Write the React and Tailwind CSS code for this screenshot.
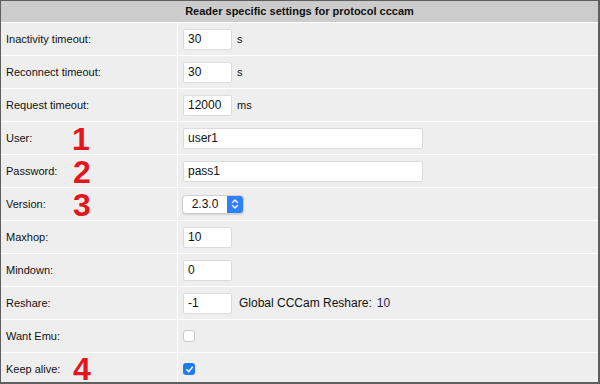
import React from "react";

const font = { fontFamily: '"Liberation Sans", Arial, sans-serif' };

function TextInput({ value, w = "w-[49px]" }) {
  return (
    <div className={`${w} h-[21px] bg-white border border-[#dcdcdc] rounded-[2px] flex items-center pl-[4px] text-[12px] text-[#111]`}>
      {value}
    </div>
  );
}

function Row({ label, children }) {
  return (
    <div className="flex gap-px h-[32px] shrink-0">
      <div className="w-[176px] bg-[#eeeeee] flex items-center pl-[5px] text-[11px] text-[#111]">{label}</div>
      <div className="flex-1 bg-[#eeeeee] flex items-center pl-[5px] text-[11px] text-[#111]">{children}</div>
    </div>
  );
}

function Mark({ n, top, left }) {
  return (
    <div
      className="absolute text-[32px] font-bold text-[#e3161d] leading-[24px]"
      style={{ top, left, fontFamily: '"Liberation Sans", Arial, sans-serif' }}
    >
      {n}
    </div>
  );
}

export default function App() {
  return (
    <div className="w-[600px] h-[384px] bg-white" style={font}>
      <div className="relative w-[600px] h-[384px] border-l border-t border-r-2 border-b-2 border-[#5f5f5f] overflow-hidden">
        <div className="flex flex-col gap-px bg-white h-full overflow-hidden">
          <div className="h-[21px] shrink-0 bg-[#cccccc] flex items-center justify-center text-[11px] font-bold text-[#111]">
            Reader specific settings for protocol cccam
          </div>
          <Row label="Inactivity timeout:">
            <TextInput value="30" />
            <span className="ml-[5px]">s</span>
          </Row>
          <Row label="Reconnect timeout:">
            <TextInput value="30" />
            <span className="ml-[5px]">s</span>
          </Row>
          <Row label="Request timeout:">
            <TextInput value="12000" />
            <span className="ml-[5px]">ms</span>
          </Row>
          <Row label="User:">
            <TextInput value="user1" w="w-[240px]" />
          </Row>
          <Row label="Password:">
            <TextInput value="pass1" w="w-[240px]" />
          </Row>
          <Row label="Version:">
            <div className="w-[62px] h-[19px] -ml-px bg-white rounded-[4px] border border-[#d0d0d0] shadow-[0_1px_1px_rgba(0,0,0,0.12)] flex items-stretch overflow-hidden">
              <div className="flex-1 flex items-center justify-center text-[12px] text-[#111]">2.3.0</div>
              <div className="w-[16px] bg-[#2f7ff7] flex items-center justify-center">
                <svg width="8" height="12" viewBox="0 0 8 12" fill="none" stroke="white" strokeWidth="1.4" strokeLinecap="round" strokeLinejoin="round">
                  <path d="M1.5 4.5 L4 2 L6.5 4.5" />
                  <path d="M1.5 7.5 L4 10 L6.5 7.5" />
                </svg>
              </div>
            </div>
          </Row>
          <Row label="Maxhop:">
            <TextInput value="10" />
          </Row>
          <Row label="Mindown:">
            <TextInput value="0" />
          </Row>
          <Row label="Reshare:">
            <TextInput value="-1" />
            <span className="ml-[7px] text-[12px]">Global CCCam Reshare:</span>
            <span className="ml-[5px] text-[12px] text-[#1d1d5c]">10</span>
          </Row>
          <Row label="Want Emu:">
            <div className="w-[12px] h-[12px] bg-white border border-[#c8c8c8] rounded-[3px]" />
          </Row>
          <Row label="Keep alive:">
            <div className="w-[12px] h-[12px] bg-[#1f7bf5] rounded-[3px] flex items-center justify-center">
              <svg width="9" height="9" viewBox="0 0 9 9" fill="none" stroke="white" strokeWidth="1.5" strokeLinecap="round" strokeLinejoin="round">
                <path d="M1.8 4.8 L3.7 6.8 L7.3 2.2" />
              </svg>
            </div>
          </Row>
        </div>
        <Mark n="1" top={126} left={71} />
        <Mark n="2" top={159} left={72} />
        <Mark n="3" top={192} left={72} />
        <Mark n="4" top={356} left={72} />
      </div>
    </div>
  );
}
